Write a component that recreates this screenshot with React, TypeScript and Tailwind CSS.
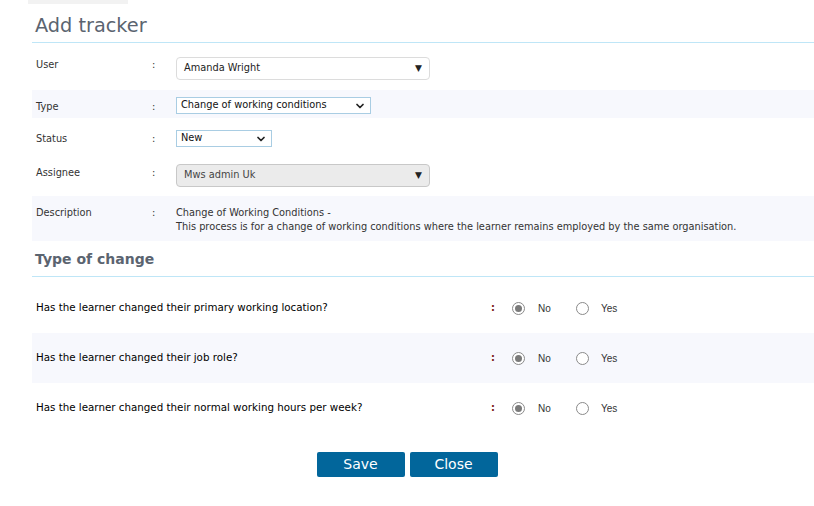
import { ChevronDown } from 'lucide-react'

const FONT = { fontFamily: '"DejaVu Sans", Verdana, sans-serif' }

function Row({
  label,
  shaded,
  className,
  children,
}: {
  label: string
  shaded?: boolean
  className?: string
  children: React.ReactNode
}) {
  return (
    <div className={`flex items-start ${shaded ? 'bg-[#f7f8fd]' : ''} ${className ?? ''}`}>
      <div className="w-[120px] pl-[4px] text-[#333]">{label}</div>
      <div className="w-[24px] text-[#333]">:</div>
      <div className="flex-1">{children}</div>
    </div>
  )
}

function Radio({ checked }: { checked?: boolean }) {
  return (
    <span className="w-[13px] h-[13px] shrink-0 rounded-full border border-[#8a8a8a] bg-white flex items-center justify-center">
      {checked && <span className="w-[7px] h-[7px] rounded-full bg-[#7a7a7a]" />}
    </span>
  )
}

function Question({ text, shaded }: { text: string; shaded?: boolean }) {
  return (
    <div className={`flex items-center h-[50px] ${shaded ? 'bg-[#f7f8fd]' : ''}`}>
      <div className="w-[459px] pl-[4px] text-black text-[10.3px]">{text}</div>
      <div className="w-[21px] font-bold text-[#7a1a1a]">:</div>
      <div className="flex items-center text-[10px] text-[#333]" style={{ fontFamily: '"Liberation Sans", Arial, sans-serif' }}>
        <Radio checked />
        <span className="ml-[13px] w-[38px]">No</span>
        <Radio />
        <span className="ml-[12px]">Yes</span>
      </div>
    </div>
  )
}

export default function App() {
  return (
    <div className="w-[814px] h-[506px] bg-white text-[9.8px] overflow-hidden" style={FONT}>
      <div className="ml-[28px] w-[100px] h-[4px] bg-[#f2f2f2]" />
      <div className="pl-[32px]">
        <h1 className="text-[19.3px] text-[#5b6470] pl-[3px] pt-[11px] pb-[5px] leading-[22px]">Add tracker</h1>
        <div className="h-px bg-[#bfe6f7]" />

        <Row label="User" className="h-[47px] pt-[15px]">
          <div className="w-[254px] h-[23px] -mt-[1px] rounded-[4px] border border-[#dcdcdc] bg-white flex items-center justify-between px-[7px] text-[#222]">
            <span>Amanda Wright</span>
            <span className="text-[9px] text-[#222]">▼</span>
          </div>
        </Row>

        <Row label="Type" shaded className="h-[28px] pt-[10px]">
          <div className="w-[195px] h-[17px] -mt-[3px] border border-[#a9cde3] bg-white flex items-center justify-between pl-[4px] pr-[4px] text-[#111]">
            <span>Change of working conditions</span>
            <ChevronDown size={12} strokeWidth={3.5} className="text-[#222]" />
          </div>
        </Row>

        <Row label="Status" className="h-[37px] pt-[14px]">
          <div className="w-[96px] h-[17px] -mt-[2px] border border-[#a9cde3] bg-white flex items-center justify-between pl-[4px] pr-[4px] text-[#111]">
            <span>New</span>
            <ChevronDown size={12} strokeWidth={3.5} className="text-[#222]" />
          </div>
        </Row>

        <Row label="Assignee" className="h-[41px] pt-[11px]">
          <div className="w-[254px] h-[23px] -mt-[2px] rounded-[4px] border border-[#c8c8c8] bg-[#ebebeb] flex items-center justify-between px-[7px] text-[#444]">
            <span>Mws admin Uk</span>
            <span className="text-[9px] text-[#222]">▼</span>
          </div>
        </Row>

        <Row label="Description" shaded className="h-[45px] pt-[10px]">
          <div className="text-[#333] leading-[14px]">
            <div>Change of Working Conditions -</div>
            <div>This process is for a change of working conditions where the learner remains employed by the same organisation.</div>
          </div>
        </Row>

        <h2 className="text-[14px] font-bold text-[#5b6470] pl-[3px] pt-[8px] pb-[7px] leading-[20px]">Type of change</h2>
        <div className="h-px bg-[#bfe6f7]" />

        <div className="pt-[6px]">
          <Question text="Has the learner changed their primary working location?" />
          <Question text="Has the learner changed their job role?" shaded />
          <Question text="Has the learner changed their normal working hours per week?" />
        </div>
      </div>

      <div className="flex justify-center gap-[5px] mt-[19px]">
        <button className="w-[88px] h-[25px] bg-[#02669b] text-white text-[14px] rounded-[2px]">Save</button>
        <button className="w-[88px] h-[25px] bg-[#02669b] text-white text-[14px] rounded-[2px]">Close</button>
      </div>
    </div>
  )
}
